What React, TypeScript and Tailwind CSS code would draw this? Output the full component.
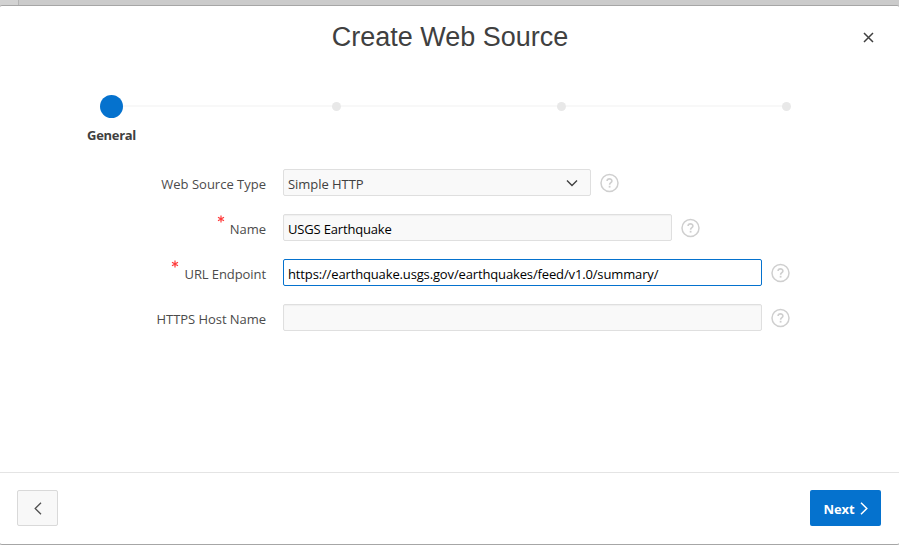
import React from "react";

function Help() {
  return (
    <svg className="ml-[9px] shrink-0 overflow-visible" width="19" height="19" viewBox="0 0 19 19" fill="none" stroke="#cfcfcf">
      <circle cx="9.5" cy="10" r="8.5" strokeWidth="1.5" />
      <path d="M7.1 8.1c0-3.1 4.8-2.9 4.8-.2 0 1.8-2.3 1.8-2.3 3.9" strokeWidth="1.6" />
      <path d="M9.6 12.8v1.8" strokeWidth="1.8" />
    </svg>
  );
}

interface FieldProps {
  label: string;
  labelSpacing?: string;
  width: string;
  value?: string;
  valueSpacing?: string;
  required?: boolean;
  focused?: boolean;
  select?: boolean;
}

function Field({ label, labelSpacing = "", width, value, valueSpacing = "", required, focused, select }: FieldProps) {
  return (
    <div className="flex h-[27px] items-center">
      <div className="flex w-[266px] shrink-0 justify-end text-[#4b4b4b]">
        {required && (
          <svg className="mt-[-1px] mr-[5px]" width="8" height="8" viewBox="0 0 8 8" stroke="#ff3b3b" strokeWidth="1.2">
            <path d="M4 .5v7M1 2.2l6 3.6M7 2.2l-6 3.6" />
          </svg>
        )}
        <span className={`mt-[3px] leading-[20px] whitespace-nowrap ${labelSpacing}`}>{label}</span>
      </div>
      <div
        className={`ml-[17px] flex h-[27px] shrink-0 items-center justify-between rounded-[2px] border pl-[4px] ${width} ${
          focused ? "border-[#0572ce] bg-white" : "border-[#dfdfdf] bg-[#f9f9f9]"
        } ${select ? "text-[#404040]" : "text-black"} ${select || focused ? "" : "shadow-[inset_0_1px_1px_rgba(0,0,0,0.04)]"}`}
      >
        <span className={`mt-[3px] leading-[20px] whitespace-nowrap ${valueSpacing}`}>{value}</span>
        {select && (
          <svg className="mr-[12px]" width="12" height="8" viewBox="0 0 12 8" fill="none" stroke="#404040" strokeWidth="1.4">
            <path d="M1 1.5l5 5 5-5" />
          </svg>
        )}
      </div>
      <Help />
    </div>
  );
}

export default function App() {
  return (
    <div className="flex h-[545px] w-[899px] flex-col overflow-hidden bg-[#cbcbcb] font-['Open_Sans',sans-serif] text-[13px]">
      <div className="h-[5px] w-[19px] shrink-0 border-r border-[#b4b4b4] bg-[#d2d2d2]" />
      <main className="flex h-[540px] flex-col rounded-[2px] border-y border-[#a6a6a6] bg-white">
        <header className="flex h-[62px] shrink-0 items-center justify-between pl-[26px]">
          <span className="w-[11px]" />
          <h1 className="text-center font-['Liberation_Sans',Arial,sans-serif] text-[27px] leading-[34px] whitespace-nowrap text-[#404040]">
            Create Web Source
          </h1>
          <svg className="mr-[25px]" width="11" height="11" viewBox="0 0 11 11" stroke="#404040" strokeWidth="1.5">
            <path d="M1 1l9 9M10 1l-9 9" />
          </svg>
        </header>

        <section className="h-[101px] shrink-0 pt-[27px]">
          <div className="flex h-[23px] items-center pl-[100px]">
            <span className="size-[23px] rounded-full bg-[#0572ce]" />
            <span className="mb-px h-[2px] w-[209px] bg-[#f8f8f8]" />
            <span className="size-[9px] rounded-full bg-[#e8e8e8]" />
            <span className="mb-px h-[2px] w-[216px] bg-[#f8f8f8]" />
            <span className="size-[9px] rounded-full bg-[#e8e8e8]" />
            <span className="mb-px h-[2px] w-[216px] bg-[#f8f8f8]" />
            <span className="size-[9px] rounded-full bg-[#e8e8e8]" />
          </div>
          <div className="mt-[7px] ml-[61px] w-[101px] text-center leading-[20px] font-bold tracking-[-0.3px] text-[#404040]">
            General
          </div>
        </section>

        <section className="flex flex-1 flex-col gap-[18px]">
          <Field label="Web Source Type" width="w-[308px]" value="Simple HTTP" valueSpacing="tracking-[-0.05px]" select />
          <Field label="Name" width="w-[389px]" value="USGS Earthquake" valueSpacing="tracking-[-0.17px]" required />
          <Field
            label="URL Endpoint"
            labelSpacing="tracking-[-0.08px]"
            width="w-[479px]"
            value="https://earthquake.usgs.gov/earthquakes/feed/v1.0/summary/"
            valueSpacing="tracking-[-0.14px]"
            required
            focused
          />
          <Field label="HTTPS Host Name" labelSpacing="tracking-[-0.05px]" width="w-[479px]" />
        </section>

        <footer className="flex h-[72px] shrink-0 items-center justify-between border-t border-[#e4e4e4] pr-[18px] pb-px pl-[17px]">
          <button className="flex h-[36px] w-[41px] items-center justify-center rounded-[2px] border border-[#d9d9d9] bg-[#f8f8f8]">
            <svg width="8" height="13" viewBox="0 0 8 13" fill="none" stroke="#505050" strokeWidth="1.3">
              <path d="M7 .7L1.2 6.5 7 12.3" />
            </svg>
          </button>
          <button className="flex h-[36px] w-[71px] items-center justify-center rounded-[2px] bg-[#0572ce] font-bold text-white">
            <span className="mt-[2px] leading-[20px] tracking-[-0.1px]">Next</span>
            <svg className="ml-[5px]" width="8" height="13" viewBox="0 0 8 13" fill="none" stroke="#fff" strokeWidth="1.5">
              <path d="M1 .7l5.8 5.8L1 12.3" />
            </svg>
          </button>
        </footer>
      </main>
    </div>
  );
}
